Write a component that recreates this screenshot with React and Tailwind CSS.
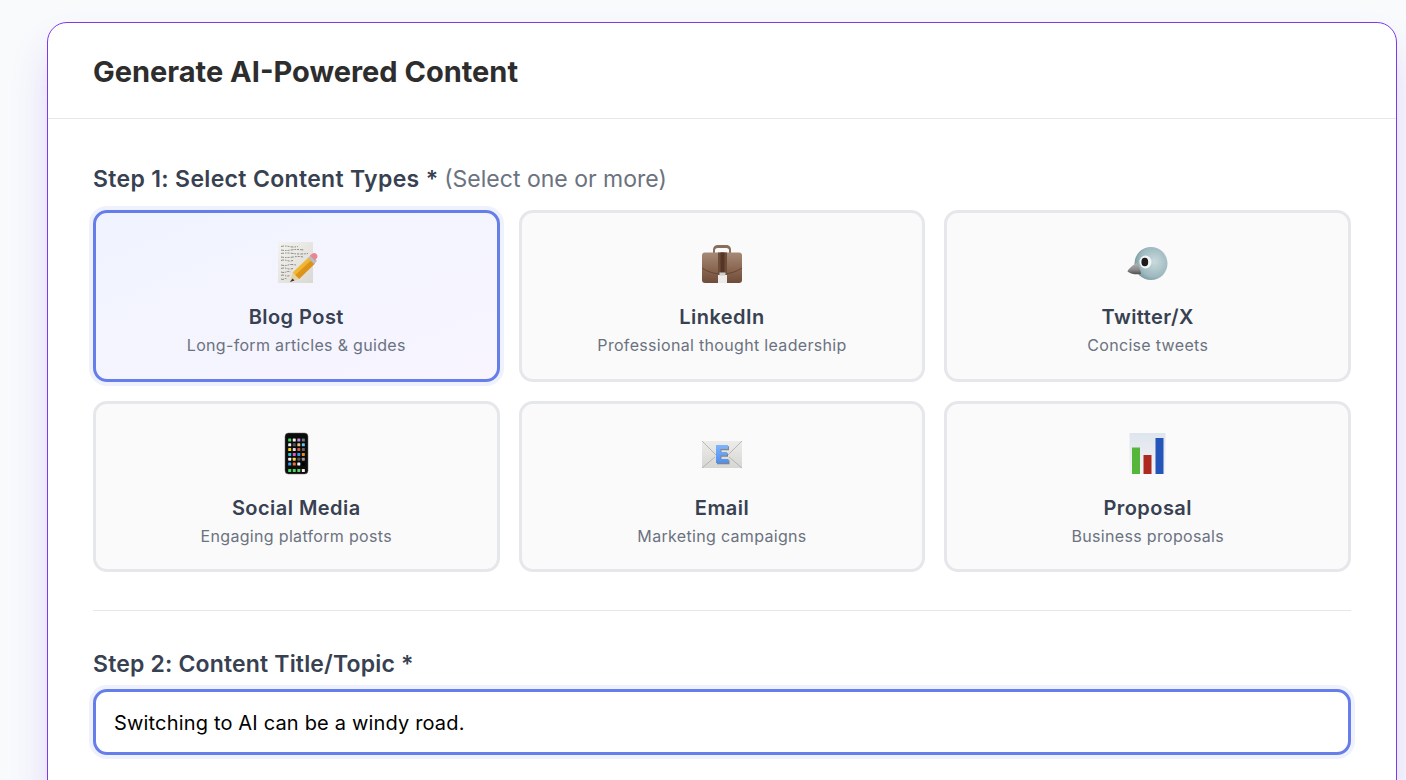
import React from "react";

const MemoIcon = () => (
  <svg width="48" height="48" viewBox="0 0 48 48" className="blur-[0.3px]">
    <defs>
      <linearGradient id="memoPaper" x1="0" y1="0" x2="1" y2="1">
        <stop offset="0" stopColor="#f4f3ef" />
        <stop offset="1" stopColor="#d9d8d3" />
      </linearGradient>
      <linearGradient id="memoPencil" x1="0" y1="0" x2="1" y2="1">
        <stop offset="0" stopColor="#fcd34d" />
        <stop offset="1" stopColor="#dd8f12" />
      </linearGradient>
    </defs>
    <rect x="6" y="3" width="35" height="41" fill="url(#memoPaper)" />
    <g stroke="#4a4742" strokeWidth="0.6" strokeDasharray="3 1 1.500 1 2 1.200" fill="none">
      <path d="M9 7.500q4-1 8 0t9 0M9 11q5 1 10 0t13 0M9 14.500q6-1 12 0t15 0M9 18q6 1 12 0t10 0M9 21.500q3-1 6 0t6 0M9 26q4 1 7 0t8 0M9 29.500q3-1 6 0t6 0M9 33q3 1 5 0t5 0M9 36.500q2-1 4 0t5 0M9 40q2 1 3 0t3 0" />
    </g>
    <path d="M20.500 33.500L37 18l6 6.500-16 15.500z" fill="url(#memoPencil)" />
    <path d="M23 36.500L39.500 21l3.500 3.500-16 15.500z" fill="#d9890f" opacity="0.7" />
    <path d="M20.500 33.500L27 40l-9 3z" fill="#e7d0a6" />
    <path d="M18 43l2.500-3.500 2 2z" fill="#333" />
    <path d="M36 19l3-3 6 6-3 3z" fill="#b9bcc0" />
    <path d="M38 16.500l2.500-2c1.500-1 3-.6 4 .4s1.400 3 .4 4.200L43 21.500z" fill="#e8878c" />
  </svg>
);

const BriefcaseIcon = () => (
  <svg width="48" height="48" viewBox="0 0 48 48" className="blur-[0.4px]">
    <defs>
      <linearGradient id="caseBody" x1="0" y1="0" x2="0" y2="1">
        <stop offset="0" stopColor="#a58a78" />
        <stop offset="0.55" stopColor="#8a6650" />
        <stop offset="1" stopColor="#6e4c3a" />
      </linearGradient>
    </defs>
    <path d="M15 14v-3.500C15 8 17 6 20 6h8c3 0 5 2 5 4.500V14h-2v-3c0-1-1-2-2.500-2h-9c-1.500 0-2.500 1-2.500 2v3z" fill="#8a6d5a" />
    <rect x="4" y="13.500" width="40" height="30.500" rx="3" fill="url(#caseBody)" />
    <path d="M4 29c6 4 13 6 20 6s14-2 20-6" fill="none" stroke="#5c3d2c" strokeWidth="0.8" />
    <rect x="20" y="13.500" width="9" height="23" fill="#6d4c3a" />
    <rect x="22.500" y="13.500" width="4" height="23" fill="#553626" />
    <rect x="20" y="36" width="9" height="8" fill="#ecebe9" />
    <rect x="21.500" y="33.500" width="6" height="3" fill="#cfcdc9" />
  </svg>
);

const BirdIcon = () => (
  <svg width="48" height="48" viewBox="0 0 48 48" className="blur-[0.3px]">
    <defs>
      <radialGradient id="birdHead" cx="0.6" cy="0.45" r="0.65">
        <stop offset="0" stopColor="#c9dadd" />
        <stop offset="0.7" stopColor="#9db9bf" />
        <stop offset="1" stopColor="#6d8e96" />
      </radialGradient>
      <linearGradient id="birdBeak" x1="0" y1="0" x2="0" y2="1">
        <stop offset="0" stopColor="#b5b5b5" />
        <stop offset="0.6" stopColor="#8a8a8a" />
        <stop offset="1" stopColor="#4d4d4d" />
      </linearGradient>
    </defs>
    <circle cx="27" cy="24.500" r="16.500" fill="url(#birdHead)" />
    <path d="M3.500 32.500c1-3 6-7 9.500-8.500 2 3 3.500 7 4 11-4 .6-10 .4-13.500-2.500z" fill="url(#birdBeak)" />
    <ellipse cx="21.500" cy="23" rx="6" ry="6.500" fill="#f3f5f5" />
    <ellipse cx="20.800" cy="23" rx="3.400" ry="4.300" fill="#1c1c1c" />
  </svg>
);

const phoneColors = [
  ["#4cd964", "#f2f2f2", "#c58bdc", "#777"],
  ["#f0f0f0", "#555", "#e8c27a", "#5ac8fa"],
  ["#ffd60a", "#ddd", "#d9534f", "#666"],
  ["#34c6d8", "#e05bc0", "#2e9bf0", "#f08a1d"],
  ["#f5f5f5", "#f7d64a", "#555", "#999"],
  ["#3b9cf0", "#f0703a", "#f5f5f5", "#000"],
];

const PhoneIcon = () => (
  <svg width="48" height="48" viewBox="0 0 48 48" className="blur-[0.2px]">
    <rect x="13" y="3" width="23" height="41" rx="3.500" fill="#0c0c0c" stroke="#6b6b6b" strokeWidth="0.5" />
    {phoneColors.map((row, r) =>
      row.map((color, c) => (
        <rect key={`${r}-${c}`} x={16.200 + c * 4.550} y={8.500 + r * 4.800} width="3" height="3" rx="0.6" fill={color} />
      ))
    )}
    {["#4cd964", "#4cd964", "#5fd068", "#f2f2f2"].map((color, c) => (
      <rect key={c} x={16.200 + c * 4.550} y="39" width="3" height="3" rx="0.6" fill={color} />
    ))}
  </svg>
);

const EnvelopeIcon = () => (
  <svg width="48" height="48" viewBox="0 0 48 48" className="blur-[0.3px]">
    <defs>
      <linearGradient id="envBody" x1="0" y1="0" x2="0" y2="1">
        <stop offset="0" stopColor="#ececea" />
        <stop offset="1" stopColor="#d6d6d3" />
      </linearGradient>
      <linearGradient id="envLetter" x1="0" y1="0" x2="0" y2="1">
        <stop offset="0" stopColor="#7fb4fb" />
        <stop offset="1" stopColor="#4f8ff0" />
      </linearGradient>
    </defs>
    <rect x="4" y="11" width="40" height="27" fill="url(#envBody)" />
    <path d="M4 11l15 15M44 11L29 26M4 38l13-11M44 38L31 27" stroke="#a9a9a6" strokeWidth="0.8" fill="none" />
    <path d="M18 15h12v4h-7.500v3h6.500v3.500h-6.500v3.500h8v4H18z" fill="#55555a" opacity="0.65" transform="translate(1 1.200)" />
    <path d="M18 15h12v4h-7.500v3h6.500v3.500h-6.500v3.500h8v4H18z" fill="url(#envLetter)" />
  </svg>
);

const ChartIcon = () => (
  <svg width="48" height="48" viewBox="0 0 48 48" className="blur-[0.3px]">
    <defs>
      <linearGradient id="chartBg" x1="0" y1="0" x2="0" y2="1">
        <stop offset="0" stopColor="#dfe5ed" />
        <stop offset="1" stopColor="#f3f4f6" />
      </linearGradient>
    </defs>
    <rect x="5.500" y="3" width="36" height="41" fill="url(#chartBg)" />
    <rect x="8" y="17.500" width="8" height="26.500" fill="#55b63c" />
    <rect x="19.500" y="25" width="8" height="19" fill="#ac2a1e" />
    <rect x="31.500" y="8" width="8" height="36" fill="#2356b8" />
  </svg>
);

const contentTypes = [
  { name: "Blog Post", desc: "Long-form articles & guides", Icon: MemoIcon, selected: true },
  { name: "LinkedIn", desc: "Professional thought leadership", Icon: BriefcaseIcon },
  { name: "Twitter/X", desc: "Concise tweets", Icon: BirdIcon },
  { name: "Social Media", desc: "Engaging platform posts", Icon: PhoneIcon },
  { name: "Email", desc: "Marketing campaigns", Icon: EnvelopeIcon },
  { name: "Proposal", desc: "Business proposals", Icon: ChartIcon },
];

export default function App() {
  return (
    <div className="h-screen overflow-hidden bg-[#f8fafc] pt-[22px] pl-[47px] font-['Inter',sans-serif]">
      <div className="w-[1350px] h-[900px] bg-white border border-[#7c3aed] rounded-[20px] shadow-[0_25px_40px_-5px_rgba(124,58,237,0.22)]">
        <div className="h-[96px] flex items-center px-[45px] pt-[2px] border-b border-[#e5e7eb]">
          <h2 className="text-[29px] font-bold text-[#2d2d2d]">Generate AI-Powered Content</h2>
        </div>

        <div className="px-[45px] pt-[44px]">
          <div className="text-[23px] leading-[32px] font-semibold text-[#374151] mb-[15px]">
            <span className="tracking-[0.33px]">Step 1: Select Content Types *</span>{" "}
            <span className="font-normal text-[#6b7280]">(Select one or more)</span>
          </div>

          <div className="grid grid-cols-3 gap-x-[19.2px] gap-y-[19px] w-[1258px]">
            {contentTypes.map(({ name, desc, Icon, selected }) => (
              <div
                key={name}
                className={
                  selected
                    ? "h-[171.55px] flex flex-col items-center pt-[26px] rounded-[14px] border-[3px] border-[#667eea] bg-gradient-to-br from-[#f0f4ff] to-[#f8f5ff] shadow-[0_0_0_4px_rgba(102,126,234,0.1)]"
                    : "h-[171.55px] flex flex-col items-center pt-[26px] rounded-[14px] border-[3px] border-[#e5e7eb] bg-[#fafafa]"
                }
              >
                <Icon />
                <div className="mt-[16px] text-[20px] leading-[28px] tracking-[0.45px] font-semibold text-[#374151]">{name}</div>
                <div className="mt-[2px] text-[16px] leading-[24px] tracking-[0.32px] text-[#6b7280]">{desc}</div>
              </div>
            ))}
          </div>

          <div className="w-[1258px] mt-[37.9px] border-t border-[#e5e7eb]" />

          <div className="mt-[37px] text-[23px] leading-[32px] tracking-[0.17px] font-semibold text-[#374151] mb-[9px]">
            Step 2: Content Title/Topic *
          </div>
          <input
            type="text"
            readOnly
            value="Switching to AI can be a windy road."
            className="block w-[1258px] h-[66px] px-[18px] pt-[2px] rounded-[14px] border-[3px] border-[#667eea] bg-white text-[20px] tracking-[0.17px] text-black outline-none shadow-[0_0_0_4px_rgba(102,126,234,0.1)]"
          />
        </div>
      </div>
    </div>
  );
}
